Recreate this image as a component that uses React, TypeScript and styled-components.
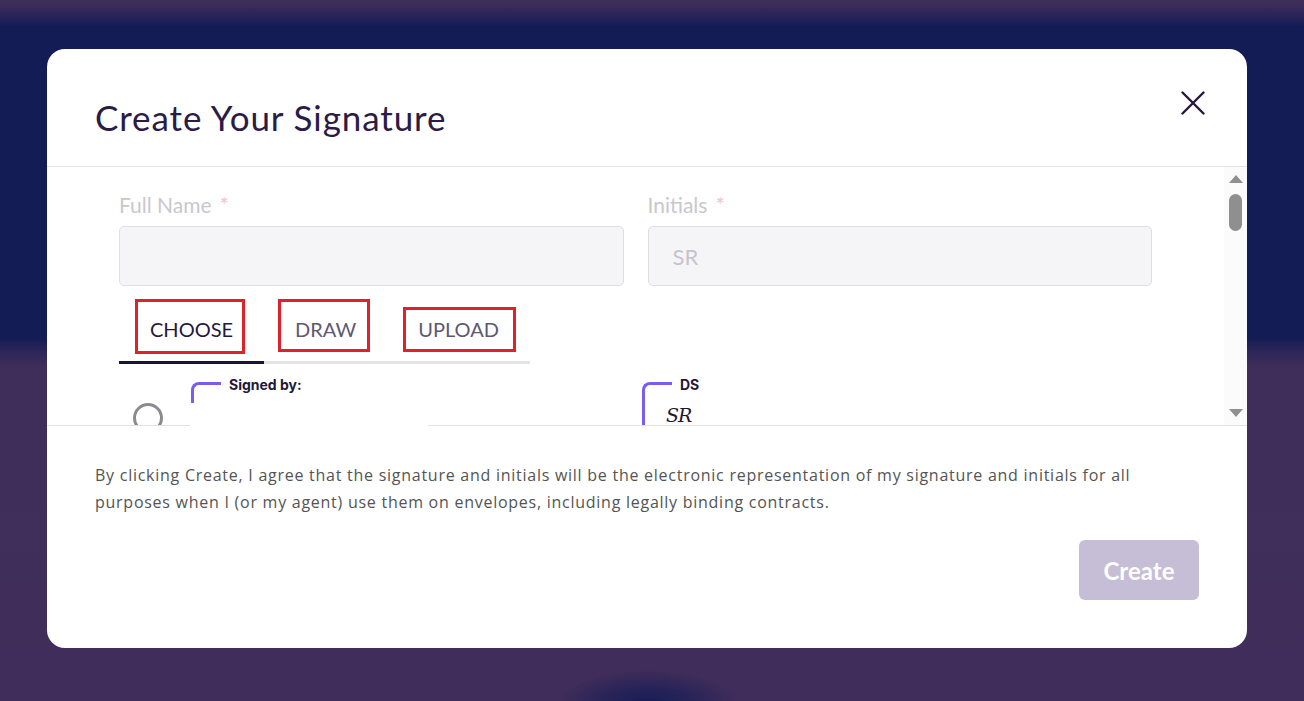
import React from "react";
import styled, { createGlobalStyle } from "styled-components";

const GlobalStyle = createGlobalStyle`
  html, body { margin: 0; padding: 0; }
  body {
    width: 1304px;
    height: 701px;
    overflow: hidden;
    font-family: Lato, "Noto Sans", sans-serif;
    background:
      radial-gradient(ellipse 90px 34px at 648px 704px, rgba(20, 28, 86, 0.95) 0%, rgba(20, 28, 86, 0.55) 50%, rgba(20, 28, 86, 0) 100%),
      linear-gradient(to bottom, #3f3059 0px, #37295a 8px, #141c55 26px, #131c55 338px, #2e2658 352px, #3f2e5a 368px, #402d5b 100%);
  }
`;

const Backdrop = styled.div`
  box-sizing: border-box;
  height: 701px;
  padding: 49px 0 0 47px;
`;

const Modal = styled.div`
  width: 1200px;
  height: 599px;
  background: #ffffff;
  border-radius: 18px;
  display: flex;
  flex-direction: column;
  overflow: hidden;
`;

const Header = styled.div`
  box-sizing: border-box;
  height: 118px;
  flex: none;
  display: flex;
  justify-content: space-between;
  align-items: flex-start;
  padding: 0 42px 0 48px;
  border-bottom: 1px solid #e3e3e3;
`;

const Title = styled.h2`
  margin: 48px 0 0;
  font-size: 35px;
  line-height: 40px;
  letter-spacing: 0.9px;
  font-weight: 400;
  color: #2a1c47;
`;

const CloseButton = styled.button`
  margin-top: 42px;
  width: 24px;
  height: 24px;
  padding: 0;
  border: none;
  background: none;
  display: flex;
`;

const ScrollBody = styled.div`
  flex: none;
  height: 258px;
  display: flex;
`;

const Content = styled.div`
  flex: 1;
  overflow: hidden;
  padding: 26px 72px 0;
`;

const FieldGrid = styled.div`
  display: grid;
  grid-template-columns: 1fr 1fr;
  column-gap: 24px;
`;

const Field = styled.div`
  display: flex;
  flex-direction: column;
`;

const Label = styled.label`
  display: flex;
  align-items: baseline;
  font-size: 21px;
  line-height: 24px;
  color: #c9c7cd;
  margin-bottom: 9px;
`;

const Required = styled.span`
  margin-left: 8px;
  font-size: 22px;
  color: #f1c2ce;
`;

const TextInput = styled.input`
  box-sizing: border-box;
  width: 100%;
  height: 60px;
  background: #f5f5f7;
  border: 1px solid #dedde1;
  border-radius: 5px;
  padding: 0 24px;
  font-family: Lato, "Noto Sans", sans-serif;
  font-size: 22px;
  color: #c6c4cb;
  &:disabled { color: #c6c4cb; -webkit-text-fill-color: #c6c4cb; opacity: 1; }
`;

const TabList = styled.div`
  display: flex;
  width: fit-content;
  margin-top: 11px;
  border-bottom: 3px solid #e4e4e4;
`;

const Tab = styled.button<{ $active?: boolean }>`
  position: relative;
  padding: 20px 31px;
  margin-bottom: -3px;
  border: none;
  border-bottom: 3px solid ${(p) => (p.$active ? "#1b1238" : "transparent")};
  background: none;
  font-family: Lato, "Noto Sans", sans-serif;
  font-size: 20px;
  line-height: 24px;
  color: ${(p) => (p.$active ? "#251840" : "#5e5873")};
`;

const Annotation = styled.span<{ $t: number; $r: number; $b: number; $l: number }>`
  position: absolute;
  top: ${(p) => p.$t}px;
  right: ${(p) => p.$r}px;
  bottom: ${(p) => p.$b}px;
  left: ${(p) => p.$l}px;
  border: 3px solid #e2202b;
  pointer-events: none;
`;

const OptionsRow = styled.div`
  display: flex;
  margin-top: 13px;
`;

const Option = styled.div`
  box-sizing: border-box;
  width: 523px;
  display: flex;
  align-items: flex-start;
  padding-left: 14px;
  gap: 28px;
`;

const Radio = styled.span`
  box-sizing: border-box;
  flex: none;
  width: 30px;
  height: 30px;
  margin-top: 26px;
  border: 3px solid #8b8a93;
  border-radius: 50%;
`;

const SigCard = styled.div`
  display: flex;
  align-items: flex-start;
  gap: 8px;
`;

const Bracket = styled.div<{ $h: number }>`
  box-sizing: border-box;
  flex: none;
  width: 30px;
  height: ${(p) => p.$h}px;
  margin-top: 5px;
  border-top: 3px solid #7a5cf0;
  border-left: 3px solid #7a5cf0;
  border-top-left-radius: 8px;
  padding: 18px 0 0 21px;
`;

const CardLabel = styled.span`
  font-family: Inter, "Liberation Sans", sans-serif;
  font-weight: 700;
  font-size: 14px;
  line-height: 16px;
  color: #231838;
`;

const Script = styled.span`
  display: block;
  white-space: nowrap;
  font-family: "DejaVu Serif", serif;
  font-style: italic;
  font-size: 19px;
  line-height: 24px;
  letter-spacing: -1px;
  color: #1e1930;
`;

const ScrollTrack = styled.div`
  flex: none;
  width: 23px;
  background: #fbfbfb;
  display: flex;
  flex-direction: column;
  align-items: center;
  padding: 8px 0;
  box-sizing: border-box;
`;

const ArrowUp = styled.span`
  width: 0;
  height: 0;
  border-left: 7.5px solid transparent;
  border-right: 7.5px solid transparent;
  border-bottom: 8px solid #8f8f8f;
`;

const ArrowDown = styled.span`
  width: 0;
  height: 0;
  margin-top: auto;
  border-left: 7.5px solid transparent;
  border-right: 7.5px solid transparent;
  border-top: 8px solid #8f8f8f;
`;

const Thumb = styled.span`
  margin-top: 11px;
  width: 13px;
  height: 37px;
  border-radius: 7px;
  background: #8f8f8f;
`;

const Footer = styled.div`
  flex: 1;
  display: flex;
  flex-direction: column;
  padding: 37px 48px 48px;
  background-image: linear-gradient(to right, #e2e2e2 0, #e2e2e2 143px, transparent 143px, transparent 381px, #e2e2e2 381px, #e2e2e2 100%);
  background-size: 100% 1px;
  background-repeat: no-repeat;
  background-position: top left;
`;

const Agreement = styled.p`
  margin: 0;
  max-width: 1060px;
  font-family: "Open Sans", "Noto Sans", sans-serif;
  font-size: 16px;
  line-height: 27px;
  letter-spacing: 0.74px;
  color: #545454;
`;

const CreateButton = styled.button`
  align-self: flex-end;
  width: 120px;
  height: 60px;
  margin-top: 24px;
  border: none;
  border-radius: 6px;
  background: #c6bdd6;
  color: #ffffff;
  font-family: Lato, "Noto Sans", sans-serif;
  font-size: 24px;
  font-weight: 700;
`;

const CloseIcon = () => (
  <svg width="24" height="24" viewBox="0 0 24 24" fill="none">
    <path d="M1.5 1.5 L22.5 22.5 M22.5 1.5 L1.5 22.5" stroke="#24183f" strokeWidth="2.4" strokeLinecap="round" />
  </svg>
);

export default function App() {
  return (
    <>
      <GlobalStyle />
      <Backdrop>
        <Modal>
          <Header>
            <Title>Create Your Signature</Title>
            <CloseButton aria-label="Close">
              <CloseIcon />
            </CloseButton>
          </Header>
          <ScrollBody>
            <Content>
              <FieldGrid>
                <Field>
                  <Label>
                    Full Name<Required>*</Required>
                  </Label>
                  <TextInput disabled readOnly value="" />
                </Field>
                <Field>
                  <Label>
                    Initials<Required>*</Required>
                  </Label>
                  <TextInput disabled readOnly value="SR" />
                </Field>
              </FieldGrid>
              <TabList>
                <Tab $active>
                  CHOOSE
                  <Annotation $t={2} $r={19} $b={7} $l={16} />
                </Tab>
                <Tab>
                  DRAW
                  <Annotation $t={2} $r={17} $b={9} $l={14} />
                </Tab>
                <Tab>
                  UPLOAD
                  <Annotation $t={10} $r={14} $b={9} $l={16} />
                </Tab>
              </TabList>
              <OptionsRow>
                <Option>
                  <Radio />
                  <SigCard>
                    <Bracket $h={11} />
                    <CardLabel>Signed by:</CardLabel>
                  </SigCard>
                </Option>
                <SigCard>
                  <Bracket $h={70}>
                    <Script>SR</Script>
                  </Bracket>
                  <CardLabel>DS</CardLabel>
                </SigCard>
              </OptionsRow>
            </Content>
            <ScrollTrack>
              <ArrowUp />
              <Thumb />
              <ArrowDown />
            </ScrollTrack>
          </ScrollBody>
          <Footer>
            <Agreement>
              By clicking Create, I agree that the signature and initials will be the electronic representation of my
              signature and initials for all purposes when I (or my agent) use them on envelopes, including legally
              binding contracts.
            </Agreement>
            <CreateButton>Create</CreateButton>
          </Footer>
        </Modal>
      </Backdrop>
    </>
  );
}
